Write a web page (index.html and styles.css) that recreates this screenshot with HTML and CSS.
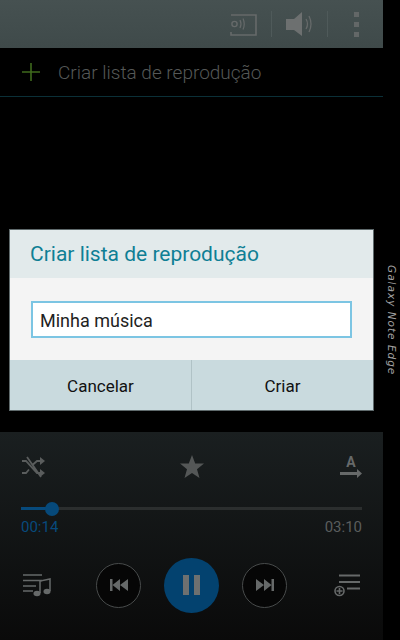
FILE: index.html
```html
<!DOCTYPE html>
<html lang='en'>
<head>
    <meta charset='UTF-8'>
    <meta name='viewport' content='width=device-width, initial-scale=1.0'>
    <title>Criar lista de reprodução</title>
    <link rel="stylesheet" href="styles.css">
</head>
<body>
    <div class='screen'>
        <nav class='topbar'>
            <svg class='ico-cast' width='28' height='24' viewBox='0 0 28 24'>
                <path d='M1 3H26V23H1V20' fill='none' stroke='#666a6a' stroke-width='1.6'/>
                <circle cx='4.5' cy='12' r='2.6' fill='none' stroke='#666a6a' stroke-width='1.4'/>
                <path d='M10 8Q12 12 10 16M13 6.5Q15.5 12 13 17.5' fill='none' stroke='#666a6a' stroke-width='1.2'/>
            </svg>
            <span class='sep'></span>
            <svg class='ico-vol' width='30' height='24' viewBox='0 0 30 24'>
                <path d='M1 7H9L17 0V24L9 18H1Z' fill='#6d7070'/>
                <path d='M21 7Q24 12 21 17M24 4Q28 12 24 20' fill='none' stroke='#666a6a' stroke-width='1.3'/>
            </svg>
            <span class='sep sep-b'></span>
            <div class='dots'><i></i><i></i><i></i></div>
        </nav>
        <div class='addrow'>
            <svg width='18' height='18' viewBox='0 0 18 18'>
                <path d='M9 0V18M0 9H18' stroke='#3f6a1d' stroke-width='1.6'/>
            </svg>
            <span class='addlabel'>Criar lista de reprodução</span>
        </div>
        <div class='middle'></div>
        <div class='player'>
            <div class='row-icons'>
                <svg width='24' height='22' viewBox='0 0 24 22'>
                    <path d='M1 5H5L16 17H20M1 17H5L8 13.5M12 8.5L16 5H20M6 1L20 21' fill='none' stroke='#5a5d5d' stroke-width='1.8'/>
                    <path d='M19 1L24 5L19 9ZM19 13L24 17L19 21Z' fill='#5a5d5d'/>
                </svg>
                <svg class='star' width='24' height='24' viewBox='0 0 24 24'>
                    <path d='M12 0L15.2 8.6H24L17 14.2L19.5 23L12 18L4.5 23L7 14.2L0 8.6H8.8Z' fill='#545757'/>
                </svg>
                <div class='textdir'>
                    <span class='letter'>A</span>
                    <svg width='22' height='9' viewBox='0 0 22 9'>
                        <path d='M0 3H17V0L22 4.5L17 9V6H0Z' fill='#666969'/>
                    </svg>
                </div>
            </div>
            <div class='seek'>
                <div class='seek-done'></div>
                <div class='seek-thumb'></div>
            </div>
            <div class='times'>
                <span class='now'>00:14</span>
                <span class='total'>03:10</span>
            </div>
            <div class='controls'>
                <svg width='29' height='24' viewBox='0 0 29 24'>
                    <path d='M1 2H20M1 7.5H20M1 13H14M1 18H11' stroke='#666969' stroke-width='1.5'/>
                    <path d='M18 20V8L28 6V18' fill='none' stroke='#666969' stroke-width='1.5'/>
                    <ellipse cx='15' cy='20.5' rx='3.5' ry='2.8' fill='#666969'/>
                    <ellipse cx='25' cy='18.5' rx='3.5' ry='2.8' fill='#666969'/>
                </svg>
                <div class='transport'>
                    <div class='round'>
                        <svg width='18' height='12' viewBox='0 0 18 12'>
                            <path d='M0 0H2.5V12H0ZM10 0V12L2.5 6ZM18 0V12L10 6Z' fill='#666969'/>
                        </svg>
                    </div>
                    <div class='round-play'>
                        <div class='pause'><i></i><i></i></div>
                    </div>
                    <div class='round'>
                        <svg width='18' height='12' viewBox='0 0 18 12'>
                            <path d='M18 0H15.5V12H18ZM8 0V12L15.5 6ZM0 0V12L8 6Z' fill='#666969'/>
                        </svg>
                    </div>
                </div>
                <svg width='26' height='23' viewBox='0 0 26 23'>
                    <path d='M5 1.5H26M5 8H26M13 14.5H26' stroke='#666969' stroke-width='2'/>
                    <circle cx='5.5' cy='17' r='4.5' fill='none' stroke='#666969' stroke-width='1.6'/>
                    <path d='M5.5 14V20M2.5 17H8.5' stroke='#666969' stroke-width='1.6'/>
                </svg>
            </div>
        </div>
    </div>
    <div class='edge'><span>Galaxy Note Edge</span></div>

    <div class='dialog'>
        <h1 class='dialog-title'>Criar lista de reprodução</h1>
        <div class='dialog-body'>
            <div class='field'>Minha música</div>
        </div>
        <div class='dialog-btns'>
            <div class='btn'>Cancelar</div>
            <div class='btn'>Criar</div>
        </div>
    </div>
</body>
</html>
```

FILE: styles.css
```css
*{
    margin: 0;
    box-sizing: border-box;
}
body{
    display: flex;
    width: 400px;
    height: 640px;
    overflow: hidden;
    background-color: #000000;
    font-family: Roboto, "Liberation Sans", sans-serif;
}
.screen{
    display: flex;
    flex-direction: column;
    width: 383px;
    height: 640px;
}
.edge{
    display: flex;
    align-items: center;
    justify-content: center;
    width: 17px;
    height: 640px;
}
.edge span{
    writing-mode: vertical-rl;
    font-family: "DejaVu Sans", sans-serif;
    font-style: oblique;
    font-size: 10.5px;
    letter-spacing: 1px;
    color: #a0a0a0;
}
.topbar{
    display: flex;
    align-items: center;
    height: 48px;
    background: linear-gradient(#465151, #3f4a4a);
    padding-left: 230px;
}
.sep{
    width: 1px;
    height: 26px;
    margin-left: 13px;
    background-color: #4f5a5a;
}
.ico-vol{
    margin-left: 13px;
}
.sep-b{
    margin-left: 12px;
}
.dots{
    display: flex;
    flex-direction: column;
    gap: 5px;
    margin-left: 26px;
}
.dots i{
    display: block;
    width: 5px;
    height: 5px;
    background-color: #636767;
}
.addrow{
    display: flex;
    align-items: center;
    gap: 18px;
    height: 49px;
    padding-left: 22px;
    border-bottom: 1px solid #0b3038;
}
.addlabel{
    font-size: 19px;
    font-weight: 300;
    color: #555857;
}
.middle{
    flex: 1;
}
.player{
    display: flex;
    flex-direction: column;
    height: 208px;
    padding: 23px 21px 0 21px;
    background: linear-gradient(#1a1f20, #0a0a0a);
}
.row-icons{
    display: flex;
    justify-content: space-between;
    align-items: center;
    height: 24px;
}
.star{
    margin-right: 2px;
}
.textdir{
    display: flex;
    flex-direction: column;
    align-items: center;
    height: 24px;
}
.letter{
    font-size: 14px;
    font-weight: 700;
    line-height: 14px;
    color: #666969;
}
.seek{
    position: relative;
    height: 3px;
    margin-top: 28px;
    background-color: #2b2e2e;
}
.seek-done{
    width: 30px;
    height: 3px;
    background-color: #074a7c;
}
.seek-thumb{
    position: absolute;
    left: 24px;
    top: -5px;
    width: 14px;
    height: 14px;
    border-radius: 50%;
    background-color: #06497a;
}
.times{
    display: flex;
    justify-content: space-between;
    margin-top: 8px;
    font-size: 15px;
    line-height: 18px;
}
.now{
    color: #074a7c;
}
.total{
    color: #5a5d5d;
}
.controls{
    display: flex;
    justify-content: space-between;
    align-items: center;
    height: 56px;
    margin-top: 21px;
    padding-left: 1px;
    padding-right: 2px;
}
.transport{
    display: flex;
    align-items: center;
    gap: 23px;
    margin-right: 2px;
}
.round{
    display: flex;
    align-items: center;
    justify-content: center;
    width: 45px;
    height: 45px;
    border: 1px solid #484b4b;
    border-radius: 50%;
    background-color: #060606;
}
.round-play{
    display: flex;
    align-items: center;
    justify-content: center;
    width: 55px;
    height: 55px;
    border-radius: 50%;
    background-color: #03426f;
}
.pause{
    display: flex;
    gap: 5px;
}
.pause i{
    display: block;
    width: 6px;
    height: 20px;
    background-color: #6d7070;
}
.dialog{
    position: absolute;
    left: 9px;
    top: 229px;
    display: flex;
    flex-direction: column;
    width: 365px;
    height: 182px;
    border: 1px solid #5f6a6c;
}
.dialog-title{
    height: 48px;
    padding-left: 20px;
    font-size: 21px;
    font-weight: 400;
    line-height: 49px;
    color: #0f7f95;
    background-color: #e2eaeb;
}
.dialog-body{
    height: 82px;
    padding: 23px 21px 0 21px;
    background-color: #f4f4f4;
}
.field{
    height: 37px;
    padding-left: 7px;
    font-size: 18px;
    line-height: 35px;
    color: #222222;
    background-color: #ffffff;
    border: 2px solid #7cc5e3;
}
.dialog-btns{
    display: flex;
    height: 50px;
    background-color: #c9dade;
}
.btn{
    flex: 1;
    padding-top: 2px;
    text-align: center;
    font-size: 17px;
    line-height: 48px;
    color: #111111;
}
.btn + .btn{
    border-left: 1px solid #b0c2c6;
}
```
